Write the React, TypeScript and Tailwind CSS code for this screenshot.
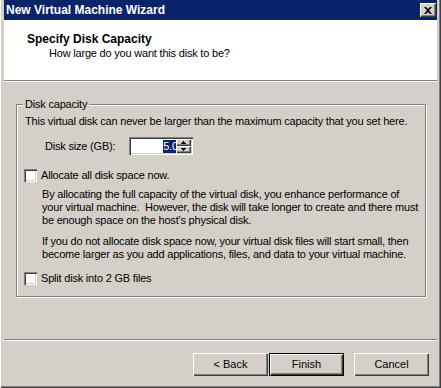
import React from 'react'

const raised = 'shadow-[inset_1px_1px_0_#fff,inset_-1px_-1px_0_#404040,inset_-2px_-2px_0_#808080]'
const sunken = 'shadow-[inset_1px_1px_0_#808080,inset_2px_2px_0_#404040,inset_-1px_-1px_0_#fff,inset_-2px_-2px_0_#d4d0c8]'

function Checkbox() {
  return <div className={`w-[13px] h-[13px] bg-white shrink-0 ${sunken}`} />
}

function Arrow({ up }: { up: boolean }) {
  return (
    <svg width="5" height="3" viewBox="0 0 5 3">
      <path d={up ? 'M2 0h1v1h1v1h1v1H0V2h1V1h1z' : 'M0 0h5v1H4v1H3v1H2V2H1V1H0z'} fill="#000" />
    </svg>
  )
}

function Button({ label, isDefault }: { label: string; isDefault?: boolean }) {
  return (
    <div className={`w-[75px] h-[23px] ${isDefault ? 'border border-black' : ''}`}>
      <div className={`w-full h-full flex items-center justify-center bg-[#d4d0c8] ${raised}`}>{label}</div>
    </div>
  )
}

export default function App() {
  return (
    <div className="w-[441px] h-[388px] bg-[#d4d0c8] flex flex-col px-[4px] pb-[2px] text-[11px] leading-[13px] text-black font-['Liberation_Sans',Arial,sans-serif] shadow-[inset_1px_0_0_#fff,inset_-1px_-1px_0_#404040,inset_-2px_-2px_0_#808080] overflow-hidden">
      {/* title bar */}
      <div className="h-[20px] bg-[#0a246a] flex items-center justify-between pl-[2px] pr-[1px]">
        <span className="text-white font-bold text-[12px]">New Virtual Machine Wizard</span>
        <div className={`w-[16px] h-[14px] bg-[#d4d0c8] flex items-center justify-center ${raised}`}>
          <svg width="8" height="7" viewBox="0 0 8 7">
            <path d="M0 0h2l2 2 2-2h2L5 3.5 8 7H6L4 5 2 7H0l3-3.5z" fill="#000" />
          </svg>
        </div>
      </div>

      {/* header */}
      <div className="h-[60px] bg-white pt-[13px]">
        <div className="pl-[23px] font-bold text-[12px]">Specify Disk Capacity</div>
        <div className="pl-[45px] pt-[1px] tracking-[-0.2px]">How large do you want this disk to be?</div>
      </div>
      <div className="h-[2px] border-t border-[#808080] border-b border-b-white" />

      {/* body */}
      <div className="flex-1 pt-[22px] pl-[12px] pr-[11px] tracking-[-0.2px]">
        <div className="relative h-[193px] border border-[#808080] shadow-[1px_1px_0_#fff,inset_1px_1px_0_#fff] pl-[8px] pt-[10px]">
          <span className="absolute top-[-7px] left-[6px] px-[2px] bg-[#d4d0c8]">Disk capacity</span>
          <div className="whitespace-nowrap">This virtual disk can never be larger than the maximum capacity that you set here.</div>

          <div className="flex items-center mt-[9px] pl-[20px]">
            <span className="w-[84px]">Disk size (GB):</span>
            <div className={`flex w-[64px] h-[18px] bg-white p-[2px] ${sunken}`}>
              <div className="flex-1 flex justify-end items-center overflow-hidden">
                <span className="bg-[#0a246a] text-white mr-[-2px] leading-[13px]">5.0</span>
              </div>
              <div className="flex flex-col w-[15px]">
                <div className={`flex-1 flex items-center justify-center bg-[#d4d0c8] ${raised}`}><Arrow up /></div>
                <div className={`flex-1 flex items-center justify-center bg-[#d4d0c8] ${raised}`}><Arrow up={false} /></div>
              </div>
            </div>
          </div>

          <div className="flex items-center gap-[4px] mt-[14px] -ml-[1px]">
            <Checkbox />
            <span>Allocate all disk space now.</span>
          </div>

          <div className="pl-[17px] mt-[6px] whitespace-nowrap">
            By allocating the full capacity of the virtual disk, you enhance performance of<br />
            your virtual machine.&nbsp; However, the disk will take longer to create and there must<br />
            be enough space on the host's physical disk.
          </div>
          <div className="pl-[17px] mt-[8px] whitespace-nowrap">
            If you do not allocate disk space now, your virtual disk files will start small, then<br />
            become larger as you add applications, files, and data to your virtual machine.
          </div>

          <div className="flex items-center gap-[4px] mt-[11px] -ml-[1px]">
            <Checkbox />
            <span>Split disk into 2 GB files</span>
          </div>
        </div>
      </div>

      <div className="h-[2px] border-t border-[#808080] border-b border-b-white" />

      {/* buttons */}
      <div className="h-[45px] pt-[12px] pr-[8px] flex justify-end items-start">
        <Button label="< Back" />
        <div className="w-[1px]" />
        <Button label="Finish" isDefault />
        <div className="w-[10px]" />
        <Button label="Cancel" />
      </div>
    </div>
  )
}
